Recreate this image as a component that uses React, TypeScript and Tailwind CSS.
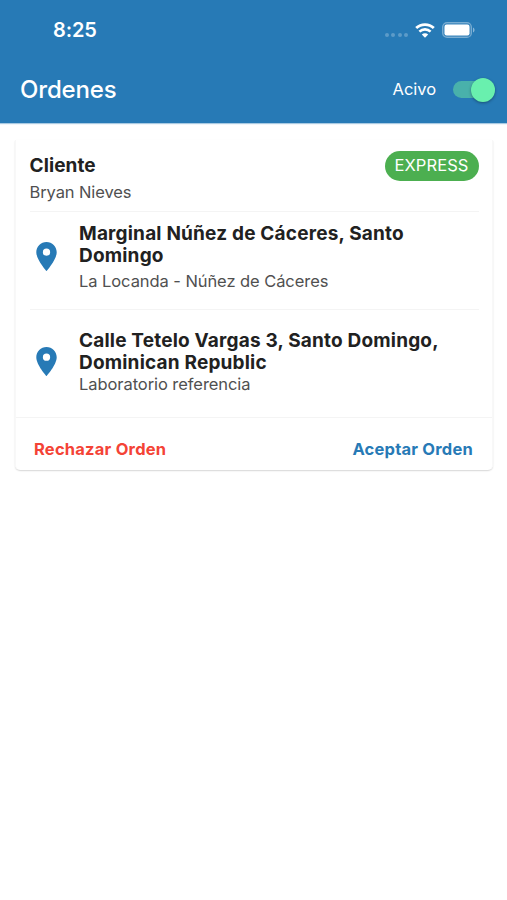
import clsx from "clsx";

const stops = [
  {
    lines: ["Marginal Núñez de Cáceres, Santo", "Domingo"],
    place: "La Locanda - Núñez de Cáceres",
    row: "h-[98px] pt-[11px]",
    pin: "mt-[16px]",
    gap: "mt-[3px]",
  },
  {
    lines: ["Calle Tetelo Vargas 3, Santo Domingo,", "Dominican Republic"],
    place: "Laboratorio referencia",
    row: "h-[107px] pt-[20px]",
    pin: "mt-[14px]",
    gap: "-mt-[1px]",
  },
];

const PinIcon = ({ className }: { className?: string }) => (
  <svg viewBox="0 0 24 24" className={clsx("size-[35px] shrink-0 fill-[#277ab6]", className)}>
    <path d="M12 2C8.13 2 5 5.13 5 9c0 5.25 7 13 7 13s7-7.75 7-13c0-3.87-3.13-7-7-7zm0 9.5a2.5 2.5 0 0 1 0-5 2.5 2.5 0 0 1 0 5z" />
  </svg>
);

const StatusBar = () => (
  <div className="flex h-[58px] items-center justify-between pt-[2px] pr-[32px] pl-[53px]">
    <span className="text-[20px] font-semibold tracking-[-0.15px]">8:25</span>
    <div className="flex items-center">
      <div className="mt-[9px] mr-[7px] flex gap-[2.5px]">
        {[0, 1, 2, 3].map((dot) => (
          <span key={dot} className="size-[4px] rounded-full bg-white/25" />
        ))}
      </div>
      <svg viewBox="0 0 20 15" className="mr-[7px] h-[15px] w-[20px] fill-none stroke-white">
        <path d="M1.2 5.1C6 .5 14 .5 18.8 5.1" strokeWidth="2.8" />
        <path d="M4.4 8.6c3.2-3 8-3 11.2 0" strokeWidth="2.6" />
        <path d="M10 14.7l-3.2-3.2c1.8-1.6 4.6-1.6 6.4 0z" className="fill-white stroke-none" />
      </svg>
      <svg viewBox="0 0 33 16" className="h-[16px] w-[33px]">
        <rect x=".6" y=".6" width="28.8" height="14.8" rx="4.5" className="fill-white/10 stroke-white/35" strokeWidth="1.2" />
        <rect x="2.5" y="2.5" width="25" height="11" rx="2.2" className="fill-white" />
        <path d="M31 5.5c2 .8 2 4.2 0 5z" className="fill-white/45" />
      </svg>
    </div>
  </div>
);

const Switch = () => (
  <div className="flex h-[24px] w-[43px] items-center justify-end">
    <div className="flex h-[17px] w-[42px] items-center justify-end rounded-full bg-[#49b1ab]">
      <span className="size-[24px] shrink-0 rounded-full bg-[#69f0ae] shadow-[0_1px_3px_rgba(0,0,0,0.35)]" />
    </div>
  </div>
);

const App = () => {
  return (
    <div className="min-h-screen bg-white font-['Inter',sans-serif] text-[#212121]">
      <header className="h-[123px] bg-[#277ab6] text-white shadow-[0_1px_1px_rgba(39,122,182,0.4)]">
        <StatusBar />
        <div className="flex h-[63px] items-center pr-[12px] pl-[20px]">
          <h1 className="text-[24px] font-medium tracking-[-0.15px]">Ordenes</h1>
          <span className="mr-[16px] ml-auto text-[16.5px] tracking-[-0.05px]">Acivo</span>
          <Switch />
        </div>
      </header>

      <main className="pt-[17px] pr-[14px] pl-[15px]">
        <div className="h-[330px] rounded-b-[5px] border-x border-[#f8f8f8] shadow-[0_1px_1.5px_rgba(0,0,0,0.16)]">
          {/* client */}
          <div className="mr-[13px] ml-[14px] flex h-[72px] justify-between border-b border-[#f4f4f4] pt-[11px]">
            <div className="-ml-[0.5px]">
              <h2 className="text-[19px] leading-[30px] font-bold tracking-[0.1px]">Cliente</h2>
              <p className="text-[16.5px] leading-[22px] tracking-[-0.1px] text-[#505050]">Bryan Nieves</p>
            </div>
            <span className="mr-[0.5px] flex h-[30px] w-[94px] items-center justify-center rounded-full bg-[#4caf50] pb-[2px] text-[16.5px] tracking-[0.1px] text-white">
              EXPRESS
            </span>
          </div>

          {/* stops */}
          {stops.map((stop, index) => (
            <div
              key={stop.place}
              className={clsx("mr-[13px] ml-[14px] flex", stop.row, index === 0 && "border-b border-[#f4f4f4]")}
            >
              <PinIcon className={clsx("-ml-[1px]", stop.pin)} />
              <div className="ml-[15px] whitespace-nowrap">
                {stop.lines.map((line) => (
                  <p key={line} className="text-[19px] leading-[22px] font-bold tracking-[0.19px]">
                    {line}
                  </p>
                ))}
                <p className={clsx("text-[16.5px] leading-[22px] tracking-[-0.07px] text-[#505050]", stop.gap)}>
                  {stop.place}
                </p>
              </div>
            </div>
          ))}

          {/* actions */}
          <div className="flex h-[53px] items-center justify-between border-t border-[#f4f4f4] pt-[11px] pr-[19px] pl-[18px] text-[16.5px] font-bold tracking-[0.22px]">
            <button className="text-[#f44336]">Rechazar Orden</button>
            <button className="text-[#277ab6]">Aceptar Orden</button>
          </div>
        </div>
      </main>
    </div>
  );
};

export default App;
